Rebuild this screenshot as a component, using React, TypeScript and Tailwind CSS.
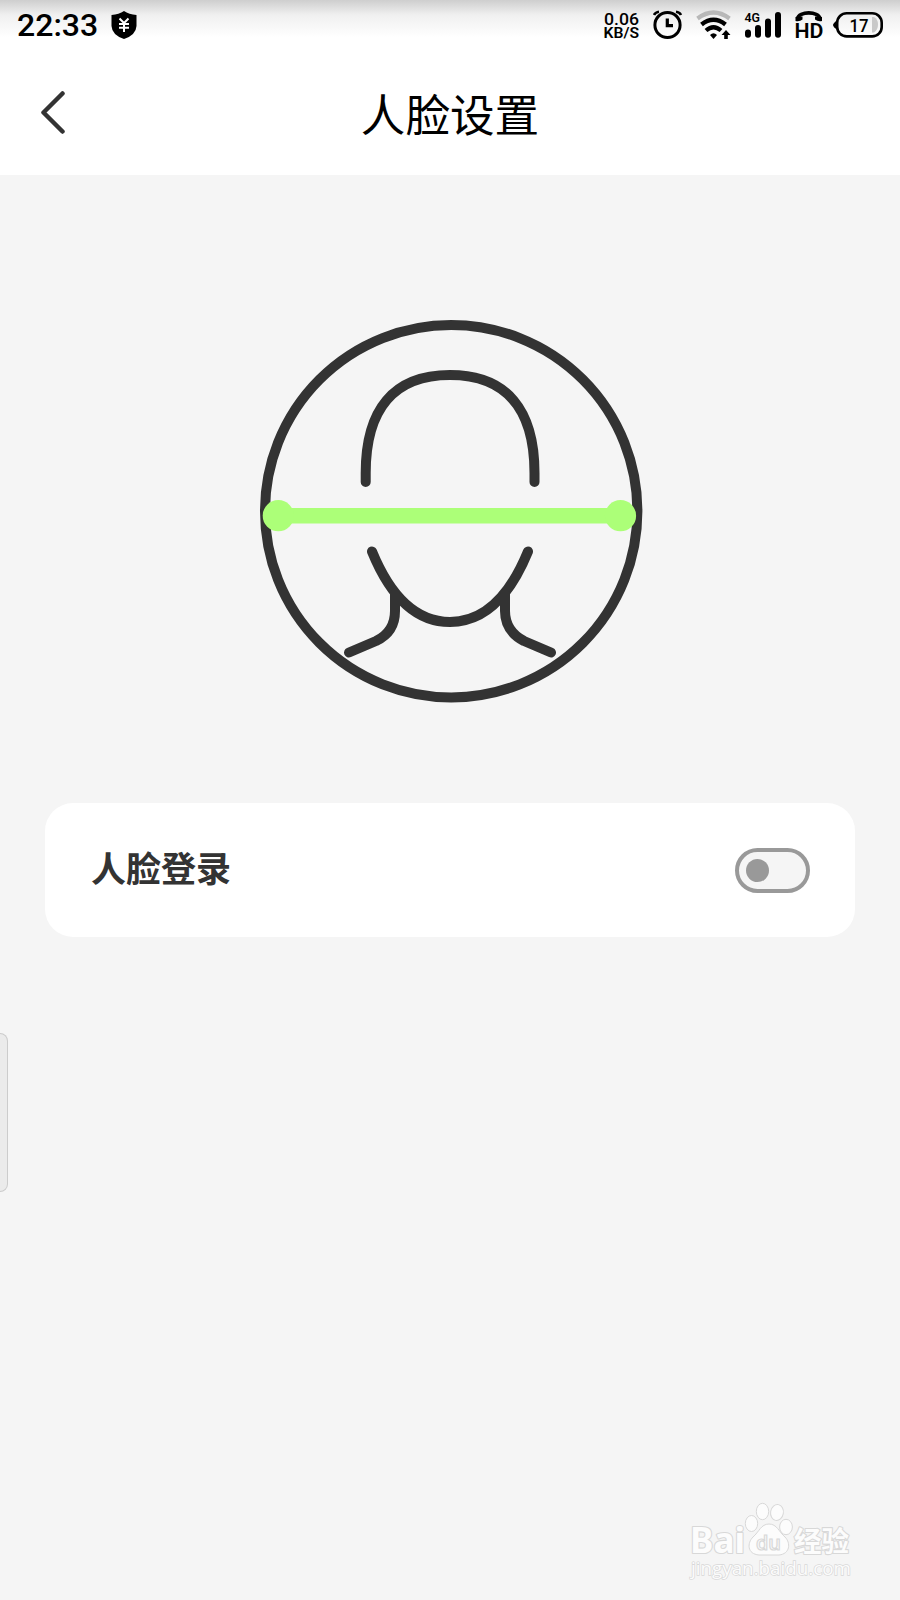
import { useState } from "react";

const ink = "#333333";

function ShieldIcon() {
  return (
    <svg width="26" height="30" viewBox="0 0 26 30" className="ml-[13px] mt-[10px]">
      <path d="M13 1Q18 4.500 25.500 5V16Q25 25 13 29Q1 25 0.500 16V5Q8 4.500 13 1Z" fill="#000" />
      <path d="M8.500 8.500L13 13L17.500 8.500M8 14H18M8 17.700H18M13 13V22" stroke="#fff" strokeWidth="2" fill="none" />
    </svg>
  );
}

function AlarmIcon() {
  return (
    <svg width="30" height="30" viewBox="0 0 30 30" fill="none" stroke="#000" className="ml-[12px] mt-[10px]">
      <circle cx="14.500" cy="15" r="12.600" strokeWidth="3" />
      <path d="M14.300 8.500V15.600H20" strokeWidth="3.200" />
      <path d="M1 5Q2.500 2.200 6 1.800M23 1.800Q26.500 2.200 28 5" strokeWidth="2.600" />
    </svg>
  );
}

function WifiIcon() {
  return (
    <svg width="36" height="30" viewBox="0 0 36 30" fill="none" className="ml-[13px] mt-[10px]">
      <path d="M1.500 8.500Q17.500 -3.500 33.500 8.500" stroke="#b8b8b8" strokeWidth="4.200" />
      <path d="M5.500 14.500Q17.500 5 29.500 14.500" stroke="#000" strokeWidth="4.400" />
      <path d="M10 20.500Q17.500 14 25 20.500" stroke="#000" strokeWidth="4.200" />
      <path d="M14 25Q17.500 21.500 21 25L17.500 29Z" fill="#000" />
      <path d="M30 20L34.500 25H31.800V29H28.200V25H25.500Z" fill="#000" />
    </svg>
  );
}

function SignalIcon() {
  return (
    <svg width="38" height="30" viewBox="0 0 38 30" className="ml-[12px] mt-[10px]">
      <text x="0.500" y="11.500" fontFamily="Roboto, sans-serif" fontSize="13.500" fontWeight="600" textLength="15.500" lengthAdjust="spacingAndGlyphs">
        4G
      </text>
      <g stroke="#000" strokeWidth="6" strokeLinecap="round">
        <path d="M4 22.500V24.800M14 18V24.800M24 11.500V24.800M34 5V24.800" />
      </g>
    </svg>
  );
}

function HdIcon() {
  return (
    <svg width="30" height="32" viewBox="0 0 30 32" className="ml-[12px] mt-[10px]">
      <path d="M3.500 8.500C4.500 1 25 1 26 8.500" stroke="#000" strokeWidth="3.600" fill="none" />
      <path d="M1.500 7L8.500 6.500V9.500Q5.500 12 1.500 11ZM28 7L21 6.500V9.500Q24 12 28 11Z" fill="#000" />
      <text x="0.500" y="28" fontFamily="Roboto, sans-serif" fontSize="20.500" fontWeight="600" textLength="29" lengthAdjust="spacingAndGlyphs">
        HD
      </text>
    </svg>
  );
}

function BatteryIcon() {
  return (
    <svg width="51" height="28" viewBox="0 0 51 28" className="ml-[9px] mt-[11px]">
      <path d="M5 8.500Q0 12 0 14T5 19.500Z" fill="#000" />
      <path d="M39 6H41Q45 8 45 13.500T41 21.500H39Z" fill="#c9c9c9" />
      <rect x="4.200" y="2.200" width="44.500" height="23.200" rx="9.500" fill="none" stroke="#000" strokeWidth="2.600" />
      <text x="16.500" y="20.500" fontFamily="Roboto, sans-serif" fontSize="18.500" fontWeight="500" textLength="19" lengthAdjust="spacingAndGlyphs">
        17
      </text>
    </svg>
  );
}

function StatusBar() {
  return (
    <div className="flex h-[50px] items-start bg-linear-to-b from-[#cecece] via-[#f0f0f0] via-30% to-white to-75% pl-[17px] pr-[16px] font-[Roboto,sans-serif] text-black">
      <span className="mt-[9px] text-[32px] leading-[32px] font-medium">22:33</span>
      <ShieldIcon />
      <svg width="38" height="34" viewBox="0 0 38 34" className="mt-[8px] ml-auto" fontFamily="Roboto, sans-serif">
        <text x="1" y="16.500" fontSize="17" fontWeight="500" textLength="35" lengthAdjust="spacingAndGlyphs">
          0.06
        </text>
        <text x="0.500" y="30" fontSize="14.500" fontWeight="600" textLength="35.500" lengthAdjust="spacingAndGlyphs">
          KB/S
        </text>
      </svg>
      <AlarmIcon />
      <WifiIcon />
      <SignalIcon />
      <HdIcon />
      <BatteryIcon />
    </div>
  );
}

function FaceScan() {
  return (
    <svg width="400" height="400" viewBox="0 0 400 400" fill="none" stroke={ink} strokeWidth="10" strokeLinecap="round">
      <circle cx="201.200" cy="201.200" r="186.200" />
      <path d="M115.700 172V163C115.700 100 143 65 200 65S284.500 100 284.500 163V172" />
      <path d="M122 241.500C139 283 163 312 200 312S261 283 278 241.500" />
      <path d="M145 284V301Q145 322 126 331L99 342.500" strokeLinejoin="round" />
      <path d="M255 284V301Q255 321 274 331L301 342.500" strokeLinejoin="round" />
      <g stroke="none" fill="#acff78">
        <rect x="28" y="198" width="342" height="15.500" />
        <circle cx="28.300" cy="205.700" r="15.600" />
        <circle cx="370.500" cy="205.700" r="15.600" />
      </g>
    </svg>
  );
}

function Watermark() {
  return (
    <svg width="180" height="100" viewBox="0 0 180 100" className="absolute top-[1490px] left-[680px]" fill="#fcfcfc" stroke="#d8d8d8" strokeWidth="1">
      <g fontWeight="700" strokeWidth="2.200" paintOrder="stroke" strokeLinejoin="round">
        <text x="10" y="63" fontSize="35" fontFamily="'Noto Sans', sans-serif" textLength="55" lengthAdjust="spacingAndGlyphs">
          Bai
        </text>
        <text x="114" y="61.500" fontSize="28" fontFamily="'Noto Sans CJK SC', sans-serif" textLength="55" lengthAdjust="spacingAndGlyphs">
          经验
        </text>
      </g>
      <ellipse cx="71.500" cy="33.500" rx="6.200" ry="8" />
      <ellipse cx="82.500" cy="21.500" rx="6.200" ry="8.200" />
      <ellipse cx="97" cy="22.500" rx="6.400" ry="8" transform="rotate(10 97 22.500)" />
      <ellipse cx="106" cy="37" rx="6.400" ry="7.700" />
      <path d="M89 34C97 34 99 42 105 47C111 53 110 64 99 65H79C67 64 67 53 73 47C79 42 81 34 89 34Z" />
      <text x="76" y="60" fontFamily="'Open Sans', sans-serif" fontWeight="600" fontSize="20" fill="#fcfcfc" strokeWidth="1.200" textLength="25" lengthAdjust="spacingAndGlyphs">
        du
      </text>
      <text x="11" y="85" fontFamily="'Open Sans', sans-serif" fontSize="18" strokeWidth="1.400" paintOrder="stroke" textLength="160" lengthAdjust="spacingAndGlyphs">
        jingyan.baidu.com
      </text>
    </svg>
  );
}

export default function App() {
  const [enabled, setEnabled] = useState(false);

  return (
    <div className="relative h-[1600px] w-[900px] overflow-hidden bg-[#f5f5f5] font-['Noto_Sans_CJK_SC',sans-serif]">
      <header className="h-[175px] bg-white">
        <StatusBar />
        <div className="flex h-[125px] items-center px-[38px]">
          <button aria-label="Back" className="w-[30px]">
            <svg width="30" height="44" viewBox="0 0 30 44" fill="none" stroke={ink} strokeWidth="4.500" strokeLinecap="round" strokeLinejoin="round">
              <path d="M24.500 2.500L5.500 21.500L24.500 40.500" />
            </svg>
          </button>
          <h1 className="flex-1 pr-[30px] text-center text-[44.600px] leading-[60px] text-black">人脸设置</h1>
        </div>
      </header>

      <main className="flex flex-col items-center pt-[135px]">
        <FaceScan />
        <div className="mt-[93px] flex h-[134px] w-[810px] items-center justify-between rounded-[28px] bg-white pr-[45px] pl-[46px]">
          <span className="pb-[5px] text-[35px] font-bold text-[#333333]">人脸登录</span>
          <button
            role="switch"
            aria-checked={enabled}
            aria-label="人脸登录"
            onClick={() => setEnabled(!enabled)}
            className={`flex h-[45px] w-[75px] items-center rounded-full border-4 border-[#999999] bg-[#f5f5f5] px-[7px] ${enabled ? "justify-end" : "justify-start"}`}
          >
            <span className="size-[23px] rounded-full bg-[#999999]" />
          </button>
        </div>
      </main>

      <div className="absolute top-[1033px] left-0 h-[159px] w-[8px] rounded-r-[8px] border border-l-0 border-[#cccccc] bg-[#ebebeb]" />
      <Watermark />
    </div>
  );
}
